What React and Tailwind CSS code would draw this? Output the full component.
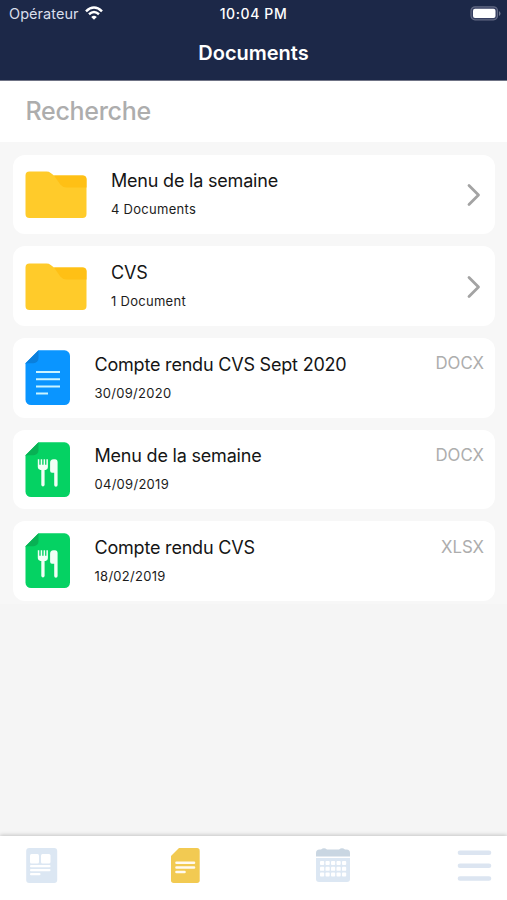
import React from 'react'

const items = [
  { id: 1, type: 'folder', title: 'Menu de la semaine', info: '4 Documents' },
  { id: 2, type: 'folder', title: 'CVS', info: '1 Document' },
  { id: 3, type: 'text', title: 'Compte rendu CVS Sept 2020', info: '30/09/2020', ext: 'DOCX' },
  { id: 4, type: 'menu', title: 'Menu de la semaine', info: '04/09/2019', ext: 'DOCX' },
  { id: 5, type: 'menu', title: 'Compte rendu CVS', info: '18/02/2019', ext: 'XLSX' },
]

function FolderIcon() {
  return (
    <svg width="62" height="48" viewBox="0 0 62 48">
      <path d="M4.500 0.500H21.500q2.500 0 4.200 1.400L29 4.600H57.500a4 4 0 0 1 4 4V43a4 4 0 0 1-4 4h-53a4 4 0 0 1-4-4V4.500a4 4 0 0 1 4-4z" fill="#ffcb2a" />
      <path d="M29 4.600H57.500a4 4 0 0 1 4 4V16.500H41.500q-3.500 0-6-2.800z" fill="#ffc015" />
    </svg>
  )
}

function FileIcon({ type }) {
  const isText = type === 'text'
  return (
    <svg width="46" height="56" viewBox="0 0 46 56">
      <path d="M13.500 0.300H39.500a5.500 5.500 0 0 1 5.500 5.500V49.500a5.500 5.500 0 0 1-5.500 5.500H6A5.500 5.500 0 0 1 0.500 49.500V13.200z" fill={isText ? '#0a95ff' : '#05d263'} />
      <path d="M13.500 0.300V8.200a5 5 0 0 1-5 5H0.500z" fill={isText ? '#0a7fdc' : '#08b154'} />
      {isText ? (
        <path d="M11 22H35M11 29.200H35M11 36.400H35M11 43.400H23" stroke="#c9f4ff" strokeWidth="2" />
      ) : (
        <g fill="#f1fff6">
          <path d="M12.800 17.300h1.500v5.500h1.400v-5.500h1.500v5.500h1.400v-5.500h1.500v5.500h1.300v-5.500h1.500v8q0 2.300-2.300 2.800h-1v15a1.700 1.700 0 0 1-3.300 0v-15h-.8q-2.700-.5-2.700-2.800z" />
          <path d="M28.500 17.300h1.800q2.300 0 2.300 2.500v23.300a1.700 1.700 0 0 1-3.400 0V30.800h-2.200q-1.900 0-1.900-2v-8q0-3.500 3.400-3.500z" />
        </g>
      )}
    </svg>
  )
}

function StatusBar() {
  return (
    <div className="grid grid-cols-3 items-center h-7 px-[6px] text-sm leading-5">
      <div className="flex items-center gap-[6px] pl-[3px] text-[#d9deeb]">
        <span className="text-[14.500px] tracking-[0.050px]">Opérateur</span>
        <svg width="18" height="14" viewBox="0 0 18 14" className="-mt-[2px]" fill="none" stroke="#fff" strokeWidth="2.500">
          <path d="M1 5.300Q9-2.300 17 5.300" />
          <path d="M4 8.300Q9 3.800 14 8.300" />
          <path d="M9 13.800L6.200 11Q9 8.700 11.800 11z" fill="#fff" stroke="none" />
        </svg>
      </div>
      <span className="text-center font-medium text-[14px] tracking-[0.600px]">10:04 PM</span>
      <svg className="-mt-[2px] justify-self-end" width="31" height="15" viewBox="0 0 31 15">
        <rect x="1" y="0.800" width="26.500" height="13" rx="4" fill="#363f61" stroke="#626983" strokeWidth="1.200" />
        <rect x="3" y="2.700" width="22.500" height="9.300" rx="2" fill="#fff" />
        <path d="M29 5v5q1.500-1 1.500-2.500T29 5z" fill="#70778f" />
      </svg>
    </div>
  )
}

function DocumentRow({ item }) {
  const isFolder = item.type === 'folder'
  return (
    <li className="flex h-[79.700px] rounded-xl bg-white pl-3 pr-[10.500px] pt-3">
      <div className={isFolder ? 'w-[86.500px] pt-[4.500px]' : 'w-[70px]'}>
        {isFolder ? <FolderIcon /> : <FileIcon type={item.type} />}
      </div>
      <div className="flex-1 pt-[2.800px]">
        <p className="text-[18px] leading-6 tracking-[-0.200px] text-[#151515]">{item.title}</p>
        <p className="mt-[8px] text-[13px] leading-4 tracking-[0.280px] text-[#1c1c1c]">{item.info}</p>
      </div>
      {isFolder ? (
        <svg className="mt-[16.500px] mr-[3px]" width="14" height="24" viewBox="0 0 14 24" fill="none" stroke="#a3a3a3" strokeWidth="2.800" strokeLinecap="round" strokeLinejoin="round">
          <path d="M2 2.500L11.500 12L2 21.500" />
        </svg>
      ) : (
        <span className="pt-[3.500px] text-[16.800px] leading-5 text-[#adadad]">{item.ext}</span>
      )}
    </li>
  )
}

function TabBar() {
  return (
    <nav className="flex h-[64.500px] items-start bg-white pl-[26px] pt-3 shadow-[0_-1px_4px_rgba(0,0,0,0.2)]">
      <svg className="mr-[111.500px]" width="32" height="36" viewBox="0 0 32 36">
        <rect x="0.200" y="0" width="31" height="35" rx="3" fill="#dce7f3" />
        <g fill="#fff">
          <rect x="4" y="6" width="9" height="9.500" rx="1.500" />
          <rect x="15" y="6" width="9.500" height="9.500" rx="1.500" />
          <rect x="4" y="17" width="20.500" height="2.200" rx="1" />
          <rect x="4" y="21" width="20.500" height="2.200" rx="1" />
          <rect x="4" y="25" width="10.500" height="2.200" rx="1" />
        </g>
      </svg>
      <svg className="mr-[116.500px]" width="30" height="36" viewBox="0 0 30 36">
        <path d="M9 0H27a2.700 2.700 0 0 1 2.700 2.700V32.300A2.700 2.700 0 0 1 27 35H3.700A2.700 2.700 0 0 1 1 32.300V8z" fill="#f2ca52" />
        <path d="M6.500 14.800H24M6.500 19.500H24M6.500 24H14.500" stroke="#fffaf0" strokeWidth="2.600" strokeLinecap="round" />
      </svg>
      <svg className="mr-[106.500px]" width="34" height="35" viewBox="0 0 34 35">
        <path d="M0 8.500V5q0-3.500 3.500-3.500H5Q8-.8 11 1.500H23Q26-.8 29 1.500h1.500Q34 1.500 34 5V8.500z" fill="#c9d6e2" />
        <path d="M0 10H34V31a3 3 0 0 1-3 3H3a3 3 0 0 1-3-3z" fill="#dce7f3" />
        <g fill="#fff">
          {[13, 18.800, 24.500].map(y => [4, 9.500, 15, 20.500, 26].map(x => (
            <rect key={`${x}-${y}`} x={x} y={y} width="4.200" height="4" rx="0.900" />
          )))}
        </g>
      </svg>
      <svg width="35" height="35" viewBox="0 0 35 35" stroke="#dce5f1" strokeWidth="4.600" strokeLinecap="round">
        <path d="M3 4.700H32M3 17.700H32M3 30.500H32" />
      </svg>
    </nav>
  )
}

export default function App() {
  return (
    <div className="flex h-[900px] w-[507px] flex-col overflow-hidden bg-[#f5f5f5] font-['Inter','Liberation_Sans',sans-serif]">
      <header className="h-[80.500px] border-b border-[#6f7385] bg-[#1c2848] text-white">
        <StatusBar />
        <h1 className="mt-[12.500px] text-center text-[20px] font-semibold leading-6">Documents</h1>
      </header>
      <div className="h-[61.500px] bg-white">
        <input
          type="text"
          placeholder="Recherche"
          className="h-full w-full pl-[25.500px] text-[25px] font-medium tracking-[-0.300px] outline-none placeholder:text-[#adadad]"
        />
      </div>
      <main className="flex-1">
        <ul className="flex flex-col gap-3 bg-[#f7f7f7] px-[12.500px] pt-[12.500px] pb-[3px]">
          {items.map(item => <DocumentRow key={item.id} item={item} />)}
        </ul>
      </main>
      <TabBar />
    </div>
  )
}
